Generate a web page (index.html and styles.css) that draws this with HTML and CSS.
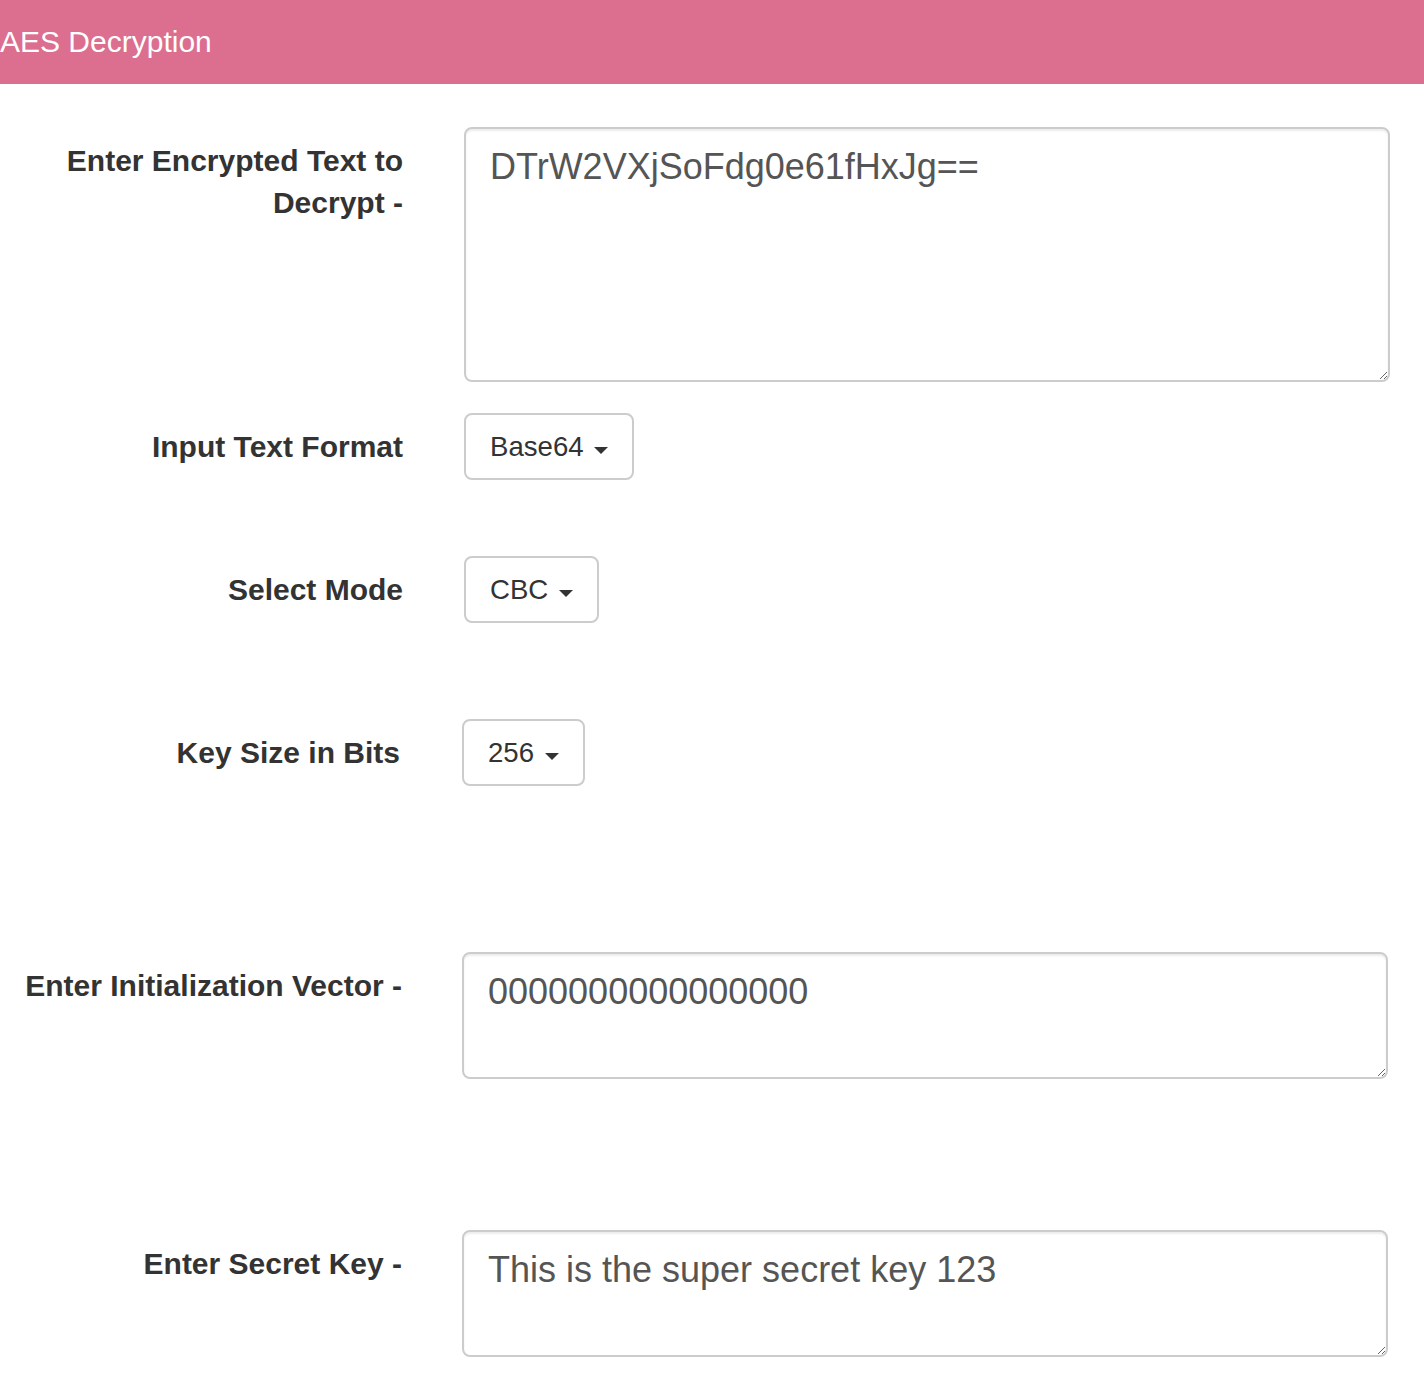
FILE: index.html
```html
<!DOCTYPE html>
<html lang="en">
<head>
<meta charset="utf-8">
<title>AES Decryption</title>
<link rel="stylesheet" href="styles.css">
</head>
<body>
<header class="panel-heading">AES Decryption</header>
<form class="form">
  <div class="form-row row-text">
    <label class="control-label" for="cipher">Enter Encrypted Text to Decrypt -</label>
    <textarea id="cipher" class="form-control tall" spellcheck="false">DTrW2VXjSoFdg0e61fHxJg==</textarea>
  </div>
  <div class="form-row row-format">
    <label class="control-label">Input Text Format</label>
    <div class="control"><button type="button" class="btn">Base64 <span class="caret"></span></button></div>
  </div>
  <div class="form-row row-mode">
    <label class="control-label">Select Mode</label>
    <div class="control"><button type="button" class="btn">CBC <span class="caret"></span></button></div>
  </div>
  <div class="form-row shifted row-key-size">
    <label class="control-label">Key Size in Bits</label>
    <div class="control"><button type="button" class="btn">256 <span class="caret"></span></button></div>
  </div>
  <div class="form-row shifted row-iv">
    <label class="control-label" for="iv">Enter Initialization Vector -</label>
    <textarea id="iv" class="form-control short" spellcheck="false">0000000000000000</textarea>
  </div>
  <div class="form-row shifted row-secret">
    <label class="control-label" for="secret">Enter Secret Key -</label>
    <textarea id="secret" class="form-control short" spellcheck="false">This is the super secret key 123</textarea>
  </div>
</form>
</body>
</html>
```
FILE: styles.css
```css
html, body {
  margin: 0;
  padding: 0;
  background: #fff;
  font-family: "Liberation Sans", Arial, sans-serif;
  color: #333;
}

.panel-heading {
  height: 84px;
  line-height: 84px;
  background: #dc6e8f;
  color: #fff;
  font-size: 30px;
  padding: 0;
  white-space: nowrap;
}

.form {
  display: block;
  padding-top: 43px;
}

.form-row {
  display: grid;
  grid-template-columns: 403px 1fr;
  column-gap: 61px;
  padding-right: 34px;
  align-items: start;
}

.form-row.shifted {
  grid-template-columns: 402px 1fr;
  column-gap: 60px;
  padding-right: 36px;
}

.row-text { margin-bottom: 31px; }
.row-format { margin-bottom: 76px; }
.row-mode { margin-bottom: 96px; }
.row-key-size { margin-bottom: 166px; }
.row-iv { margin-bottom: 151px; }

.control-label {
  display: block;
  text-align: right;
  font-weight: bold;
  font-size: 30px;
  line-height: 42px;
  padding-top: 13px;
  color: #333;
}

.row-key-size .control-label {
  margin-right: 2px;
}

.control {
  display: flex;
  justify-content: flex-start;
}

.form-control {
  display: block;
  box-sizing: border-box;
  width: 100%;
  margin: 0;
  padding: 12px 22px 12px 24px;
  border: 2px solid #ccc;
  border-radius: 8px;
  box-shadow: inset 0 2px 2px rgba(0, 0, 0, 0.075);
  background: #fff;
  color: #555;
  font-family: "Liberation Sans", Arial, sans-serif;
  font-size: 36px;
  line-height: 51px;
  resize: vertical;
  outline: none;
}

.form-control.tall { height: 255px; }
.form-control.short { height: 127px; }

.btn {
  display: inline-block;
  box-sizing: border-box;
  height: 67px;
  margin: 0;
  padding: 12px 24px 12px 24px;
  border: 2px solid #ccc;
  border-radius: 8px;
  background: #fff;
  color: #333;
  font-family: "Liberation Sans", Arial, sans-serif;
  font-size: 27.6px;
  line-height: 39px;
  white-space: nowrap;
  cursor: pointer;
}

.caret {
  display: inline-block;
  width: 0;
  height: 0;
  margin-left: 3px;
  margin-top: 4px;
  vertical-align: middle;
  border-top: 7px solid #333;
  border-left: 7.5px solid transparent;
  border-right: 7.5px solid transparent;
}
```
